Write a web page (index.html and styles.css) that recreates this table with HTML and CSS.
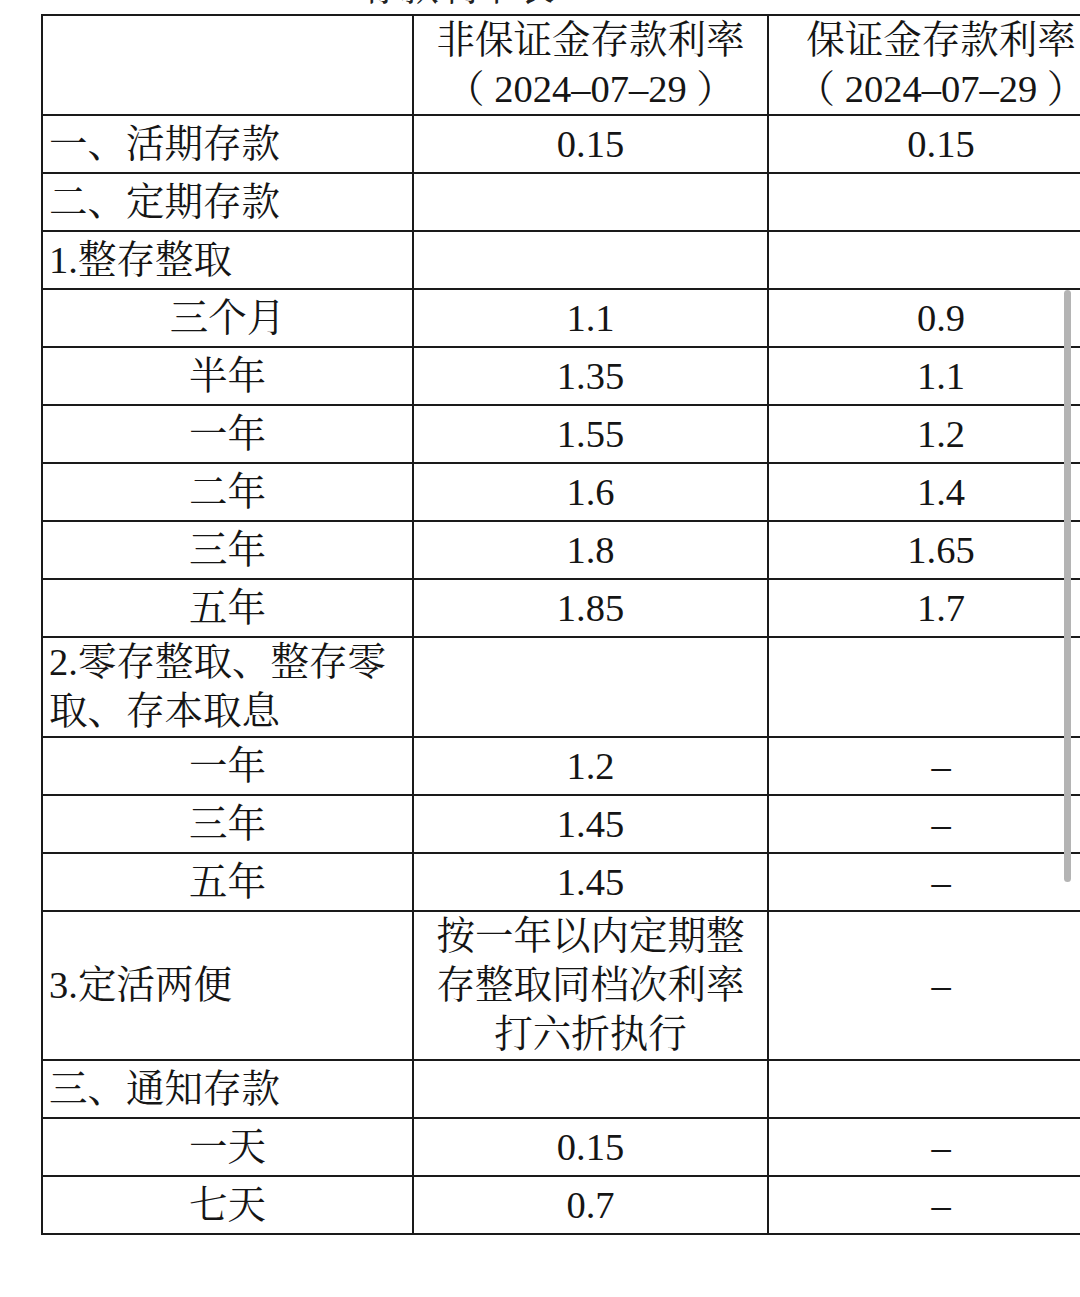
FILE: index.html
```html
<!DOCTYPE html>
<html lang="zh-CN">
<head>
<meta charset="utf-8">
<title>存款利率表</title>
<link rel="stylesheet" href="styles.css">
</head>
<body>
<div class="page">
  <div class="title">存款利率表</div>
  <table class="rates">
    <colgroup>
      <col class="c1"><col class="c2"><col class="c3">
    </colgroup>
    <tr class="head">
      <td></td>
      <td class="mid">非保证金存款利率<br>（ 2024–07–29 ）</td>
      <td class="mid">保证金存款利率<br>（ 2024–07–29 ）</td>
    </tr>
    <tr><td class="left">一、活期存款</td><td class="mid">0.15</td><td class="mid">0.15</td></tr>
    <tr><td class="left">二、定期存款</td><td></td><td></td></tr>
    <tr><td class="left">1.整存整取</td><td></td><td></td></tr>
    <tr><td class="mid">三个月</td><td class="mid">1.1</td><td class="mid">0.9</td></tr>
    <tr><td class="mid">半年</td><td class="mid">1.35</td><td class="mid">1.1</td></tr>
    <tr><td class="mid">一年</td><td class="mid">1.55</td><td class="mid">1.2</td></tr>
    <tr><td class="mid">二年</td><td class="mid">1.6</td><td class="mid">1.4</td></tr>
    <tr><td class="mid">三年</td><td class="mid">1.8</td><td class="mid">1.65</td></tr>
    <tr><td class="mid">五年</td><td class="mid">1.85</td><td class="mid">1.7</td></tr>
    <tr><td class="left">2.零存整取、整存零取、存本取息</td><td></td><td></td></tr>
    <tr><td class="mid">一年</td><td class="mid">1.2</td><td class="mid">–</td></tr>
    <tr><td class="mid">三年</td><td class="mid">1.45</td><td class="mid">–</td></tr>
    <tr><td class="mid">五年</td><td class="mid">1.45</td><td class="mid">–</td></tr>
    <tr><td class="left">3.定活两便</td><td class="mid">按一年以内定期整存整取同档次利率打六折执行</td><td class="mid">–</td></tr>
    <tr><td class="left">三、通知存款</td><td></td><td></td></tr>
    <tr><td class="mid">一天</td><td class="mid">0.15</td><td class="mid">–</td></tr>
    <tr><td class="mid">七天</td><td class="mid">0.7</td><td class="mid">–</td></tr>
  </table>
  <div class="scrollbar"></div>
</div>
</body>
</html>
```

FILE: styles.css
```css
html, body {
  margin: 0;
  padding: 0;
  background: #ffffff;
  overflow: hidden;
}

.page {
  position: relative;
  width: 1080px;
  height: 1297px;
  overflow: hidden;
  font-family: "Liberation Serif", "Noto Serif CJK SC", "Noto Sans CJK SC", serif;
  color: #151515;
  font-size: 38.5px;
}

.title {
  height: 44px;
  line-height: 44px;
  margin-top: -35px;
  margin-bottom: 5px;
  padding-left: 362px;
  white-space: nowrap;
  color: #222;
}

.rates {
  margin-left: 41px;
  width: 1072px;
  table-layout: fixed;
  border-collapse: collapse;
}

.c1 { width: 371px; }
.c2 { width: 355px; }
.c3 { width: 346px; }

.rates td {
  border: 2px solid #1a1a1a;
  height: 56px;
  padding: 0 6px;
  line-height: 49px;
  vertical-align: middle;
}

.rates td.left {
  text-align: left;
}

.rates td.mid {
  text-align: center;
}

.scrollbar {
  position: absolute;
  left: 1064px;
  top: 290px;
  width: 7px;
  height: 592px;
  border-radius: 4px;
  background: #b4b4b4;
}
```
